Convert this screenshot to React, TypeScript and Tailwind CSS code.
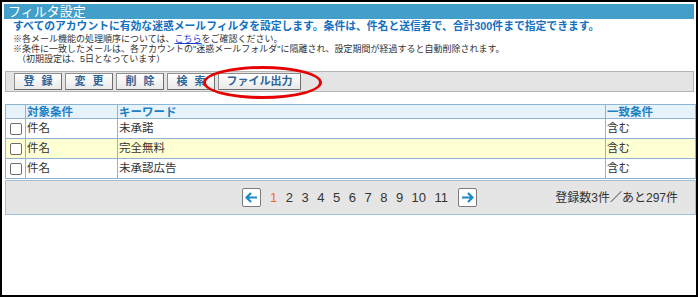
const rows = [
  { target: "件名", keyword: "未承諾", match: "含む", hl: false },
  { target: "件名", keyword: "完全無料", match: "含む", hl: true },
  { target: "件名", keyword: "未承認広告", match: "含む", hl: false },
];

const buttons = [
  { label: "登録", w: "w-[48px]", spaced: true },
  { label: "変更", w: "w-[48px]", spaced: true },
  { label: "削除", w: "w-[48px]", spaced: true },
  { label: "検索", w: "w-[48px]", spaced: true },
  { label: "ファイル出力", w: "w-[83px]", spaced: false },
];

function Arrow({ dir }: { dir: "left" | "right" }) {
  return (
    <span className="flex h-[19px] w-[19px] items-center justify-center rounded-[2px] border border-[#7a7a7a] bg-white">
      <svg width="13" height="11" viewBox="0 0 13 11" fill="none">
        {dir === "left" ? (
          <path d="M12 5.5H2M6 1L1.5 5.5L6 10" stroke="#1a8cc8" strokeWidth="2.2" />
        ) : (
          <path d="M1 5.5H11M7 1L11.5 5.5L7 10" stroke="#1a8cc8" strokeWidth="2.2" />
        )}
      </svg>
    </span>
  );
}

export default function App() {
  return (
    <div className="relative h-[297px] w-[698px] border-2 border-black bg-white p-[2px] font-['Liberation_Sans','Noto_Sans_CJK_JP',sans-serif] text-[#333]">
      {/* Title */}
      <div className="h-[15px] bg-[#419fc9] pl-[4px] text-[13px] leading-[15px] text-white">
        フィルタ設定
      </div>

      {/* Description */}
      <p className="mt-[1px] pl-[9px] text-[10.8px] font-bold leading-[12px] text-[#1170c0]">
        すべてのアカウントに有効な迷惑メールフィルタを設定します。条件は、件名と送信者で、合計300件まで指定できます。
      </p>
      <div className="mt-[2px] pl-[9px] text-[9px] leading-[10px] text-[#333]">
        <p>
          ※各メール機能の処理順序については、
          <a className="text-[#1a3fc8] underline">こちら</a>
          をご確認ください。
        </p>
        <p>
          ※条件に一致したメールは、各アカウントの"迷惑メールフォルダ"に隔離され、設定期間が経過すると自動削除されます。
        </p>
        <p className="pl-[4px]">（初期設定は、5日となっています）</p>
      </div>

      {/* Toolbar */}
      <div className="ml-[1px] mt-[7px] flex h-[21px] items-start gap-[3px] border border-[#b4b4b4] bg-[#e4e4e4] pl-[8px] pt-[1px]">
        {buttons.map((b) => (
          <button
            key={b.label}
            className={`${b.w} flex h-[17px] items-center justify-center border border-[#8e8e8e] border-b-[#6e6e6e] border-r-[#6e6e6e] bg-gradient-to-b from-white to-[#e9e9e9] text-[11px] font-bold leading-none text-[#2f6496]`}
          >
            {b.spaced ? (
              <span className="pl-[7px] tracking-[7px]">{b.label}</span>
            ) : (
              b.label
            )}
          </button>
        ))}
      </div>

      {/* Table */}
      <table className="ml-[1px] mt-[12px] w-[690px] table-fixed border-collapse text-[11.5px]">
        <colgroup>
          <col className="w-[20px]" />
          <col className="w-[92px]" />
          <col className="w-[488px]" />
          <col className="w-[90px]" />
        </colgroup>
        <thead>
          <tr className="h-[14px] bg-[#e6f3fb] text-left text-[11.5px] font-bold leading-[12px] text-[#1e80c4]">
            <th className="border border-[#8db4d2]"></th>
            <th className="border border-[#8db4d2] pl-[1px]">対象条件</th>
            <th className="border border-[#8db4d2] pl-[1px]">キーワード</th>
            <th className="border border-[#8db4d2] pl-[1px]">一致条件</th>
          </tr>
        </thead>
        <tbody>
          {rows.map((r) => (
            <tr key={r.keyword} className={`h-[20px] ${r.hl ? "bg-[#ffffd4]" : "bg-white"}`}>
              <td className="border border-[#8db4d2]">
                <span className="ml-[4px] block h-[12px] w-[12px] rounded-[2px] border border-[#6c6c6c] bg-white" />
              </td>
              <td className="border border-[#8db4d2] pl-[1px]">{r.target}</td>
              <td className="border border-[#8db4d2] pl-[1px]">{r.keyword}</td>
              <td className="border border-[#8db4d2] pl-[1px]">{r.match}</td>
            </tr>
          ))}
        </tbody>
      </table>

      {/* Pager */}
      <div className="ml-[1px] mt-[1px] flex h-[35px] w-[691px] items-center border border-[#9fc0d6] bg-[#e5e5e5] pl-[236px] pr-[17px]">
        <div className="flex items-center">
          <Arrow dir="left" />
          <div className="ml-[9px] mr-[10px] flex items-center gap-[8.5px] text-[13px] text-[#333]">
            {[1, 2, 3, 4, 5, 6, 7, 8, 9, 10, 11].map((n) => (
              <span key={n} className={n === 1 ? "text-[#f07020]" : ""}>
                {n}
              </span>
            ))}
          </div>
          <Arrow dir="right" />
        </div>
        <span className="ml-auto text-[12px] text-[#333]">登録数3件／あと297件</span>
      </div>

      {/* Red highlight */}
      <div className="absolute left-[201px] top-[64px] h-[33px] w-[119px] rounded-[50%] border-[3px] border-[#e60000]" />
    </div>
  );
}
